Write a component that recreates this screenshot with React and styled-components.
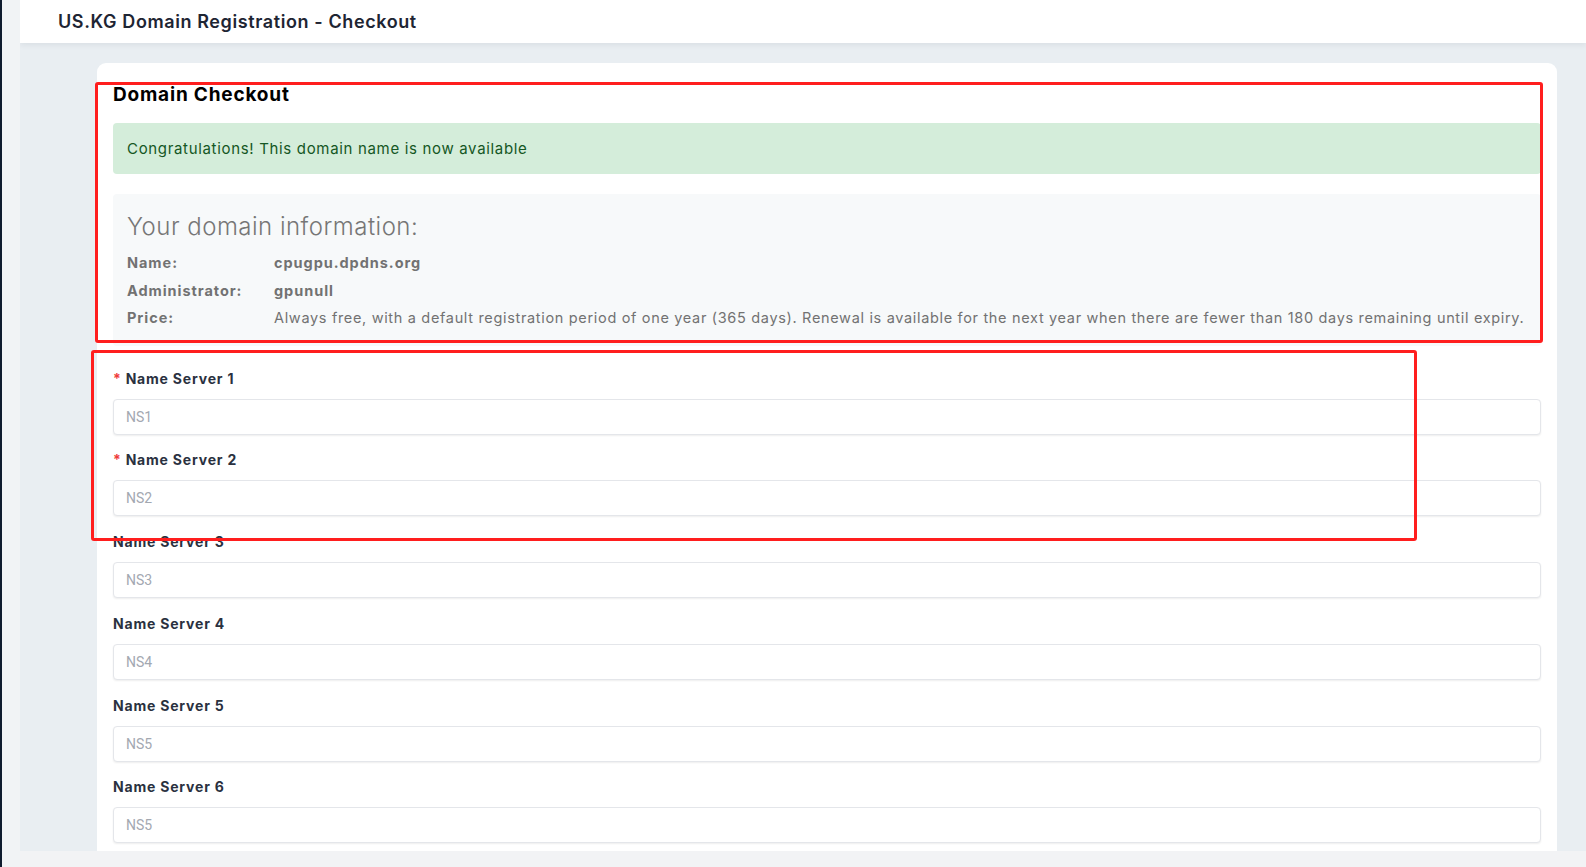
import React from "react";
import styled, { createGlobalStyle } from "styled-components";

const GlobalStyle = createGlobalStyle`
	* {
		box-sizing: border-box;
	}
	html, body {
		margin: 0;
		padding: 0;
		background: #f2f3f5;
		font-family: Inter, "Open Sans", sans-serif;
	}
`;

const Page = styled.div`
	position: relative;
	display: flex;
	width: 1586px;
	height: 867px;
	overflow: hidden;
	background: #f2f3f5;
`;
const SideEdge = styled.div`
	flex: 0 0 20px;
	background: #f1f3f5;
	border-left: 2px solid #0f1b2e;
`;
const Main = styled.main`
	flex: 1;
	display: flex;
	flex-direction: column;
	height: 851px;
	overflow: hidden;
	background: #e9eef2;
`;
const TopBar = styled.header`
	flex: 0 0 43px;
	display: flex;
	align-items: center;
	padding-left: 38px;
	background: #ffffff;
	box-shadow: 0 2px 6px rgba(15, 23, 42, 0.07);
	position: relative;
	z-index: 1;
`;
const TopTitle = styled.h1`
	margin: 0;
	font-size: 18px;
	letter-spacing: 0.6px;
	font-weight: 600;
	color: #1e2533;
`;
const Content = styled.div`
	flex: 1;
	padding: 20px 29px 0 77px;
`;
const Card = styled.section`
	background: #ffffff;
	border-radius: 9px;
	padding: 20px 16px 16px 16px;
`;
const CardTitle = styled.h2`
	margin: 0 0 16px 0;
	font-size: 19px;
	line-height: 24px;
	letter-spacing: 0.8px;
	font-weight: 700;
	color: #000000;
`;
const Alert = styled.div`
	background: #d4edda;
	color: #155724;
	border-radius: 4px;
	padding: 15px 14px;
	font-size: 15px;
	line-height: 21px;
	letter-spacing: 0.67px;
	margin-bottom: 20px;
`;
const InfoBox = styled.div`
	background: #f7f9fa;
	border-radius: 4px;
	padding: 18px 14px 14px 14px;
	margin-bottom: 22px;
`;
const InfoHeading = styled.h3`
	margin: 0 0 8px 0;
	font-size: 24px;
	line-height: 29px;
	letter-spacing: 0.48px;
	font-weight: 300;
	color: #767676;
`;
const InfoRow = styled.div`
	display: grid;
	grid-template-columns: 147px 1fr;
	font-size: 14.5px;
	line-height: 27.5px;
	color: #727272;
`;
const InfoLabel = styled.span`
	font-weight: 700;
	letter-spacing: 0.95px;
`;
const InfoValue = styled.span`
	font-weight: ${(p) => (p.$strong ? 700 : 400)};
	letter-spacing: ${(p) => (p.$strong ? "0.95px" : "0.67px")};
`;
const Field = styled.div`
	margin-bottom: 14.8px;
`;
const FieldLabel = styled.label`
	display: block;
	font-size: 14px;
	line-height: 21px;
	letter-spacing: 0.8px;
	font-weight: 700;
	color: #2a3140;
	margin-bottom: 10px;
`;
const Required = styled.span`
	color: #ef3b3b;
	margin-right: 4px;
`;
const TextInput = styled.input`
	display: block;
	width: 100%;
	height: 36px;
	padding: 0 12px;
	border: 1px solid #e4e6ea;
	border-radius: 4px;
	box-shadow: 0 1px 2px rgba(0, 0, 0, 0.07);
	font-family: Roboto, "Liberation Sans", sans-serif;
	font-size: 14px;
	color: #333;
	background: #fff;
	outline: none;
	&::placeholder {
		color: #a3a8b1;
	}
`;
const Marker = styled.div`
	position: absolute;
	border: 3px solid #ff1e1e;
	border-radius: 3px;
	pointer-events: none;
	z-index: 5;
`;

const servers = [
	{ label: "Name Server 1", ph: "NS1", required: true },
	{ label: "Name Server 2", ph: "NS2", required: true },
	{ label: "Name Server 3", ph: "NS3" },
	{ label: "Name Server 4", ph: "NS4" },
	{ label: "Name Server 5", ph: "NS5" },
	{ label: "Name Server 6", ph: "NS5" },
];

const App = () => {
	return (
		<Page>
			<GlobalStyle />
			<SideEdge />
			<Main>
				<TopBar>
					<TopTitle>US.KG Domain Registration - Checkout</TopTitle>
				</TopBar>
				<Content>
					<Card>
						<CardTitle>Domain Checkout</CardTitle>
						<Alert>Congratulations! This domain name is now available</Alert>
						<InfoBox>
							<InfoHeading>Your domain information:</InfoHeading>
							<InfoRow>
								<InfoLabel>Name:</InfoLabel>
								<InfoValue $strong>cpugpu.dpdns.org</InfoValue>
							</InfoRow>
							<InfoRow>
								<InfoLabel>Administrator:</InfoLabel>
								<InfoValue $strong>gpunull</InfoValue>
							</InfoRow>
							<InfoRow>
								<InfoLabel>Price:</InfoLabel>
								<InfoValue>
									Always free, with a default registration period of one year (365 days). Renewal is available for the next year when there are fewer than 180 days remaining until expiry.
								</InfoValue>
							</InfoRow>
						</InfoBox>
						{servers.map((s) => (
							<Field key={s.label}>
								<FieldLabel>
									{s.required && <Required>*</Required>}
									{s.label}
								</FieldLabel>
								<TextInput placeholder={s.ph} />
							</Field>
						))}
					</Card>
				</Content>
			</Main>
			<Marker style={{ left: 95, top: 82, width: 1448, height: 261 }} />
			<Marker style={{ left: 91, top: 350, width: 1326, height: 191 }} />
		</Page>
	);
};

export default App;
